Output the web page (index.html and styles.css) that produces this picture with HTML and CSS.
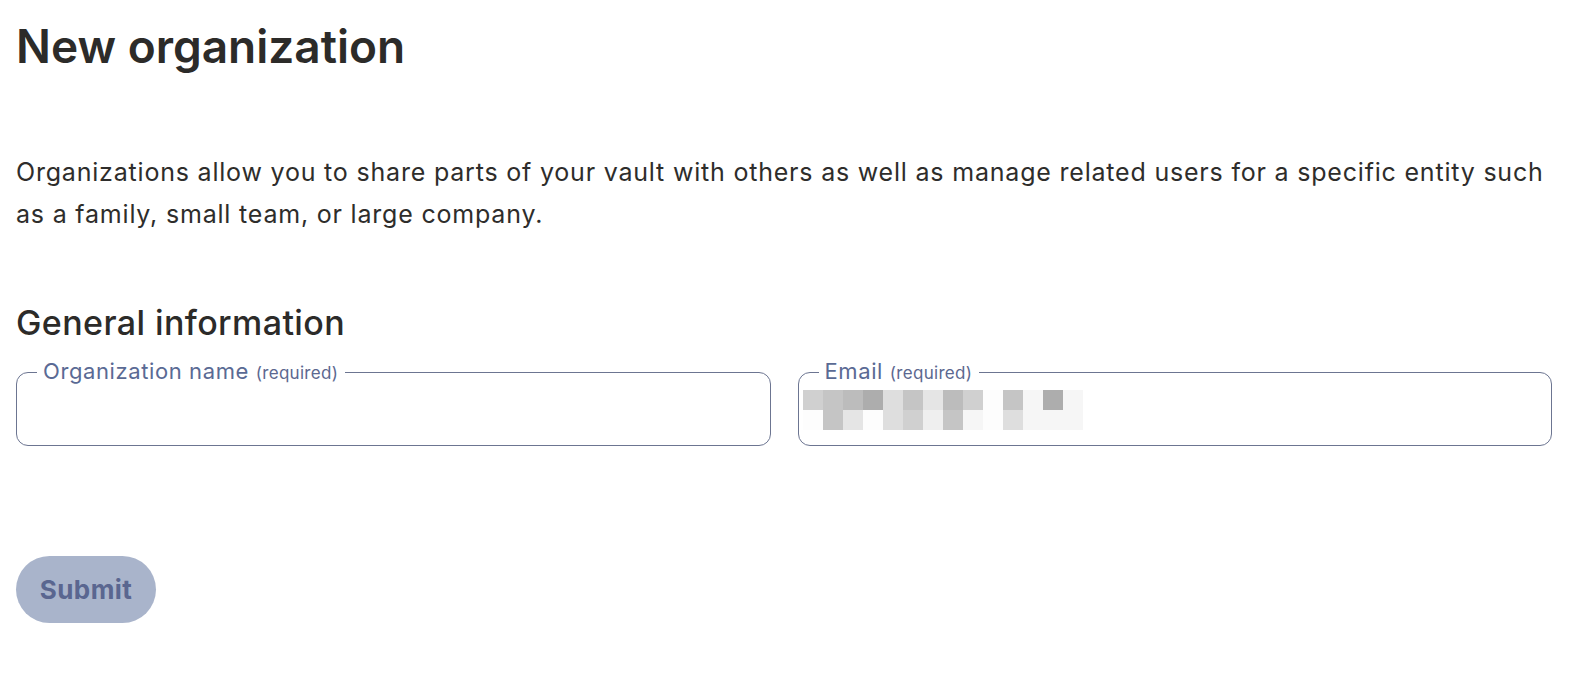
FILE: index.html
```html
<!DOCTYPE html>
<html lang="en">
<head>
<meta charset="utf-8">
<title>New organization</title>
<link rel="stylesheet" href="styles.css">
</head>
<body>
<main class="page">
  <h1 class="title">New organization</h1>
  <p class="intro">Organizations allow you to share parts of your vault with others as well as manage related users for a specific entity such as a family, small team, or large company.</p>
  <h2 class="section">General information</h2>
  <div class="fields">
    <fieldset class="field">
      <legend class="label">Organization name <span class="req">(required)</span></legend>
      <div class="value"></div>
    </fieldset>
    <fieldset class="field">
      <legend class="label">Email <span class="req">(required)</span></legend>
      <div class="value">
        <div class="blur">
          <span class="c c4"></span><span class="c c3"></span><span class="c c2"></span><span class="c c1"></span><span class="c c5"></span><span class="c c3"></span><span class="c c6"></span><span class="c c2"></span><span class="c c4"></span><span class="c c9"></span><span class="c c3"></span><span class="c c8"></span><span class="c c1"></span><span class="c c8"></span>
          <span class="c c9"></span><span class="c c3"></span><span class="c c6"></span><span class="c c9"></span><span class="c c5"></span><span class="c c4"></span><span class="c c7"></span><span class="c c3"></span><span class="c c8"></span><span class="c c9"></span><span class="c c5"></span><span class="c c8"></span><span class="c c8"></span><span class="c c8"></span>
        </div>
      </div>
    </fieldset>
  </div>
  <button class="submit" type="button">Submit</button>
</main>
</body>
</html>
```

FILE: styles.css
```css
html, body {
  margin: 0;
  padding: 0;
  background: #ffffff;
}
body {
  font-family: Inter, "Noto Sans", "Liberation Sans", sans-serif;
  color: #2d2c2a;
}
.page {
  padding: 13px 26px 0 16px;
}
.title {
  margin: 0;
  font-size: 46px;
  font-weight: 600;
  line-height: 66px;
  letter-spacing: 0;
  color: #2c2b29;
}
.intro {
  margin: 72px 0 0;
  font-size: 25px;
  line-height: 42px;
  font-weight: 400;
  letter-spacing: 0.8px;
  color: #2e2d2b;
}
.section {
  margin: 66px 0 0;
  font-size: 34px;
  line-height: 44px;
  font-weight: 500;
  letter-spacing: 0.4px;
  color: #2c2b29;
}
.fields {
  display: grid;
  grid-template-columns: 1fr 1fr;
  gap: 27px;
  margin-top: 14px;
}
.field {
  margin: 0;
  padding: 0;
  border: 1px solid #6c7591;
  border-radius: 12px;
  height: 87px;
  box-sizing: border-box;
  min-width: 0;
}
.label {
  margin-left: 20px;
  padding: 0 7px 0 6px;
  font-size: 22px;
  line-height: 24px;
  letter-spacing: 0.6px;
  color: #5a6a94;
  font-weight: 400;
}
.req {
  font-size: 17px;
  letter-spacing: 0.3px;
  color: #5c6890;
}
.value {
  height: 60px;
  padding: 5px 0 0 4px;
  box-sizing: border-box;
}
.blur {
  display: grid;
  grid-template-columns: repeat(14, 20px);
  grid-auto-rows: 20px;
}
.c { display: block; }
.c1 { background: #adadad; }
.c2 { background: #bcbcbc; }
.c3 { background: #c5c5c5; }
.c4 { background: #d0d0d0; }
.c5 { background: #dedede; }
.c6 { background: #e5e5e5; }
.c7 { background: #efefef; }
.c8 { background: #f6f6f6; }
.c9 { background: #fdfdfd; }
.submit {
  display: block;
  margin-top: 110px;
  width: 140px;
  height: 67px;
  border: none;
  border-radius: 34px;
  background: #a9b4cb;
  color: #5a6690;
  font-family: inherit;
  font-size: 26px;
  font-weight: 700;
  letter-spacing: 0.4px;
  padding: 0;
}
```
